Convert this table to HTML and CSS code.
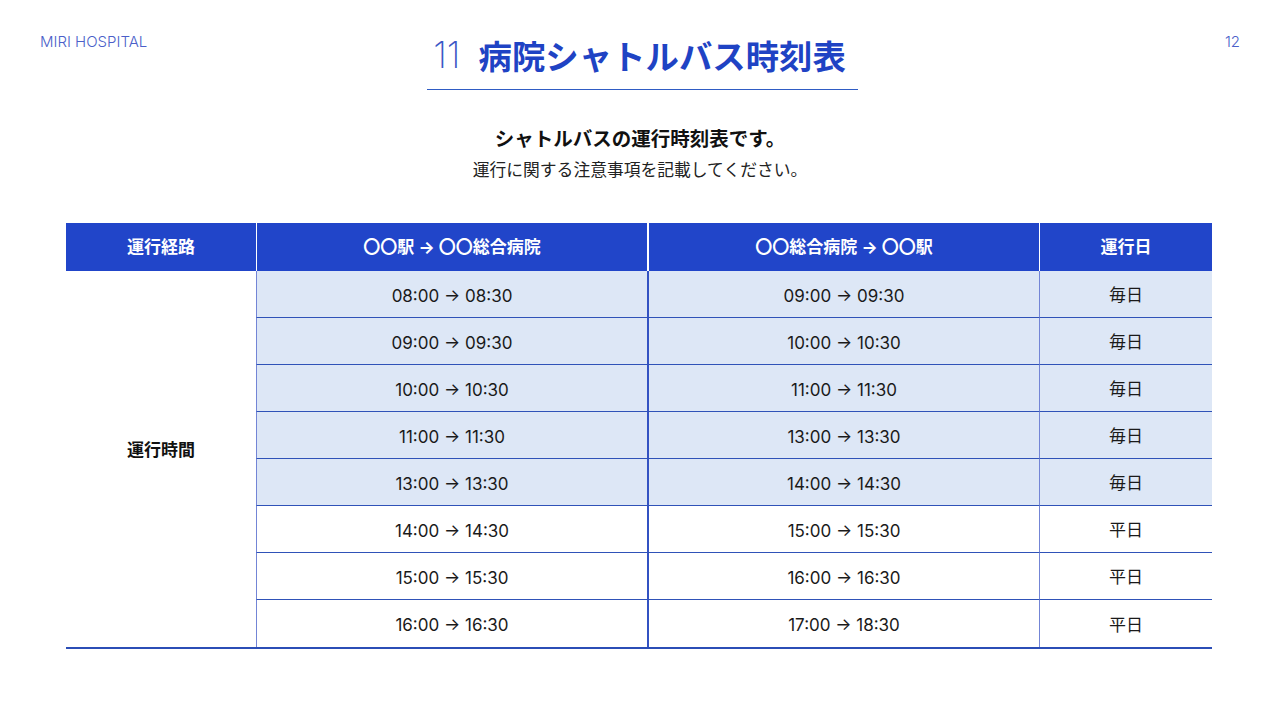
FILE: index.html
```html
<!DOCTYPE html>
<html lang="ja">
<head>
<meta charset="utf-8">
<title>病院シャトルバス時刻表</title>
<link rel="stylesheet" href="styles.css">
</head>
<body>
<div class="slide">
  <header class="top">
    <span class="brand">MIRI HOSPITAL</span>
    <h1 class="title"><span class="num">11</span><span class="jp">病院シャトルバス時刻表</span></h1>
    <span class="page">12</span>
  </header>

  <section class="intro">
    <p class="lead">シャトルバスの運行時刻表です。</p>
    <p class="note">運行に関する注意事項を記載してください。</p>
  </section>

  <div class="timetable">
    <div class="th c1">運行経路</div>
    <div class="th c2">〇〇駅 → 〇〇総合病院</div>
    <div class="th c3">〇〇総合病院 → 〇〇駅</div>
    <div class="th c4">運行日</div>

    <div class="label">運行時間</div>

    <div class="td c2 alt">08:00 → 08:30</div>
    <div class="td c3 alt">09:00 → 09:30</div>
    <div class="td c4 alt">毎日</div>

    <div class="td c2 alt">09:00 → 09:30</div>
    <div class="td c3 alt">10:00 → 10:30</div>
    <div class="td c4 alt">毎日</div>

    <div class="td c2 alt">10:00 → 10:30</div>
    <div class="td c3 alt">11:00 → 11:30</div>
    <div class="td c4 alt">毎日</div>

    <div class="td c2 alt">11:00 → 11:30</div>
    <div class="td c3 alt">13:00 → 13:30</div>
    <div class="td c4 alt">毎日</div>

    <div class="td c2 alt">13:00 → 13:30</div>
    <div class="td c3 alt">14:00 → 14:30</div>
    <div class="td c4 alt">毎日</div>

    <div class="td c2">14:00 → 14:30</div>
    <div class="td c3">15:00 → 15:30</div>
    <div class="td c4">平日</div>

    <div class="td c2">15:00 → 15:30</div>
    <div class="td c3">16:00 → 16:30</div>
    <div class="td c4">平日</div>

    <div class="td c2 last">16:00 → 16:30</div>
    <div class="td c3 last">17:00 → 18:30</div>
    <div class="td c4 last">平日</div>
  </div>
</div>
</body>
</html>
```

FILE: styles.css
```css
* { box-sizing: border-box; }

html, body {
  margin: 0;
  padding: 0;
  background: #ffffff;
}

body {
  font-family: "Inter", "Noto Sans CJK JP", sans-serif;
  color: #161616;
}

.slide {
  width: 1280px;
  height: 720px;
  overflow: hidden;
  display: flex;
  flex-direction: column;
}

.top {
  display: grid;
  grid-template-columns: 1fr auto 1fr;
  align-items: start;
  padding: 0 40px;
}

.brand,
.page {
  font-family: "Inter", sans-serif;
  font-weight: 300;
  font-size: 15px;
  line-height: 18px;
  color: #4b5fc9;
  margin-top: 33px;
}

.page {
  justify-self: end;
}

.title {
  margin: 30px 0 0 5px;
  padding: 0 12px 9px 6px;
  border-bottom: 1.5px solid #2f5cc4;
  display: flex;
  align-items: center;
  gap: 18px;
  font-weight: 700;
}

.title .num {
  font-family: "Inter", sans-serif;
  font-weight: 200;
  font-size: 36px;
  line-height: 50px;
  color: #3d58c6;
}

.title .jp {
  font-family: "Noto Sans CJK JP", sans-serif;
  font-weight: 700;
  font-size: 33.4px;
  line-height: 50px;
  color: #1f43c4;
}

.intro {
  text-align: center;
  margin-top: 34px;
}

.lead {
  margin: 0;
  font-family: "Noto Sans CJK JP", sans-serif;
  font-weight: 700;
  font-size: 19.5px;
  line-height: 28px;
  color: #111;
}

.note {
  margin: 5px 0 0;
  font-family: "Noto Sans CJK JP", sans-serif;
  font-size: 16.8px;
  line-height: 24px;
  color: #222;
}

.timetable {
  margin: 42px 0 0 66px;
  width: 1146px;
  display: grid;
  grid-template-columns: 190px 391px 392px 173px;
  grid-template-rows: 48px repeat(8, 47px);
  border-bottom: 2px solid #2b4db6;
  font-size: 17px;
}

.th,
.td,
.label {
  display: flex;
  align-items: center;
  justify-content: center;
}

.th {
  background: #2145c9;
  color: #ffffff;
  font-weight: 700;
  font-size: 17px;
  padding-bottom: 3px;
}

.th.c2,
.th.c4 { border-left: 1px solid #ffffff; }
.th.c3 { border-left: 2px solid #ffffff; }

.label {
  grid-row: 2 / span 8;
  grid-column: 1;
  font-weight: 700;
  color: #111;
  padding-bottom: 22px;
}

.td {
  background: #ffffff;
  border-bottom: 1px solid #2f52b8;
  color: #1a1a1a;
}

.td.alt { background: #dde7f6; }

.td.c2,
.td.c3 { padding-top: 3px; }

.td.c2 { border-left: 1px solid #7385d6; }
.td.c3 { border-left: 2px solid #3352c2; }
.td.c4 { border-left: 1px solid #7385d6; padding-bottom: 1px; }

.td.last { border-bottom: none; }
```
